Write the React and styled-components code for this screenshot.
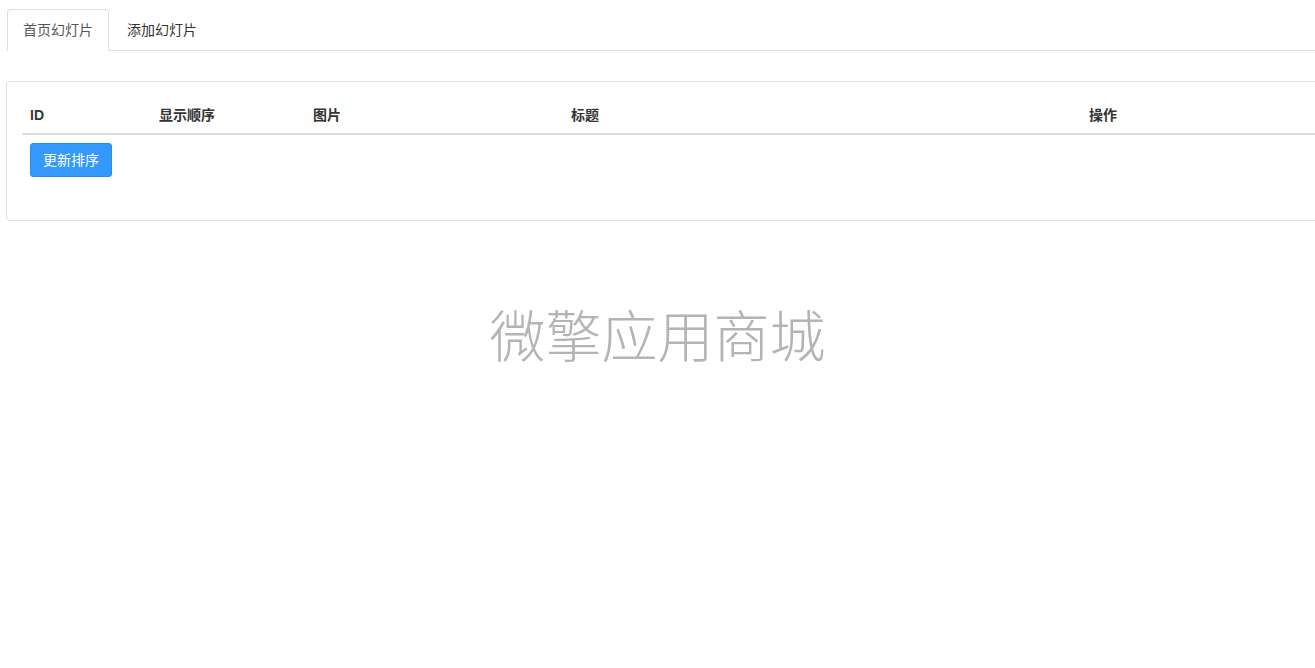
import React from 'react'
import { styled, createGlobalStyle } from 'styled-components'

const columns = [
  { label: 'ID', width: '129px' },
  { label: '显示顺序', width: '154px' },
  { label: '图片', width: '258px' },
  { label: '标题', width: '518px' },
  { label: '操作', width: 'auto' },
]

function App() {
  return (
    <>
      <GlobalStyle />
      <Page>
        <Tabs>
          <Tab $active>首页幻灯片</Tab>
          <Tab>添加幻灯片</Tab>
        </Tabs>
        <Panel>
          <Table>
            <thead>
              <tr>
                {columns.map((c) => (
                  <Th key={c.label} $width={c.width}>{c.label}</Th>
                ))}
              </tr>
            </thead>
            <tbody>
              <tr>
                <Td colSpan={5}>
                  <Button>更新排序</Button>
                </Td>
              </tr>
            </tbody>
          </Table>
        </Panel>
      </Page>
      <Watermark>微擎应用商城</Watermark>
    </>
  )
}

export default App

const GlobalStyle = createGlobalStyle`
  html, body {
    margin: 0;
    padding: 0;
    overflow: hidden;
    background: #fff;
  }
  body {
    font-family: "Liberation Sans", "Noto Sans CJK SC", sans-serif;
    font-size: 14px;
    line-height: 1.42857;
    color: #333;
  }
`
const Page = styled.div`
  width: 1340px;
  padding: 9px 0 0 6px;
`
const Tabs = styled.ul`
  display: flex;
  list-style: none;
  margin: 0 0 30px;
  padding: 0;
  border-bottom: 1px solid #ddd;
`
const Tab = styled.li`
  margin-left: ${(p) => (p.$active ? '1px' : '0')};
  margin-right: 2px;
  margin-bottom: -1px;
  padding: 10px 15px;
  line-height: 20px;
  border: 1px solid ${(p) => (p.$active ? '#ddd' : 'transparent')};
  border-bottom-color: ${(p) => (p.$active ? '#fff' : 'transparent')};
  border-radius: 4px 4px 0 0;
  background: ${(p) => (p.$active ? '#fff' : 'transparent')};
  color: ${(p) => (p.$active ? '#555' : '#333')};
  cursor: pointer;
`
const Panel = styled.div`
  border: 1px solid #ddd;
  border-radius: 4px;
  padding: 15px;
  background: #fff;
`
const Table = styled.table`
  width: 100%;
  border-collapse: collapse;
  border-spacing: 0;
  margin-bottom: 20px;
`
const Th = styled.th`
  width: ${(p) => p.$width};
  box-sizing: border-box;
  padding: 8px;
  line-height: 20px;
  text-align: left;
  font-weight: bold;
  border-bottom: 2px solid #ddd;
`
const Td = styled.td`
  padding: 8px;
  line-height: 20px;
  border-top: 1px solid #ddd;
`
const Button = styled.button`
  display: inline-block;
  padding: 6px 12px;
  font-family: inherit;
  font-size: 14px;
  line-height: 20px;
  color: #fff;
  background: #3399ff;
  border: 1px solid #2b8ce8;
  border-radius: 3px;
  cursor: pointer;
`
const Watermark = styled.div`
  position: fixed;
  left: 0;
  right: 0;
  top: 297px;
  text-align: center;
  font-family: "Noto Sans CJK SC", sans-serif;
  font-size: 56px;
  font-weight: 300;
  line-height: 72px;
  color: #b4b4b4;
  pointer-events: none;
`
